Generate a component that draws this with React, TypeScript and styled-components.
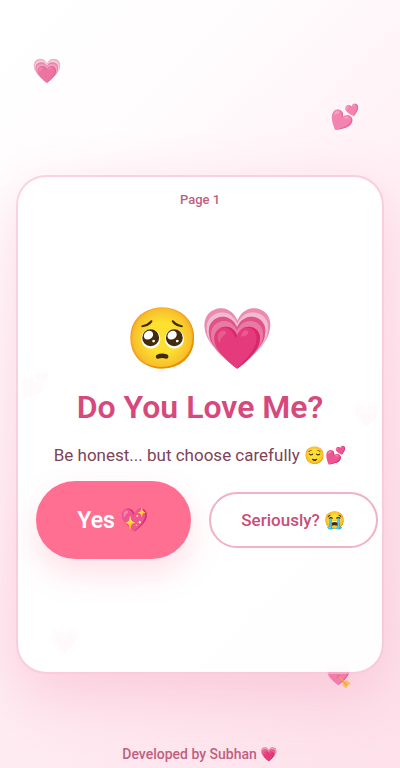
import React from "react";
import styled, { createGlobalStyle } from "styled-components";

const GlobalStyle = createGlobalStyle`
  *, *::before, *::after {
    box-sizing: border-box;
  }
  body {
    margin: 0;
    font-family: Roboto, "Noto Color Emoji", sans-serif;
  }
`;

const Page = styled.div`
  position: relative;
  display: flex;
  flex-direction: column;
  min-height: 100vh;
  overflow: hidden;
  padding: 175px 16px 4px;
  background: linear-gradient(135deg, #ffffff 0%, #fffdfe 20%, #fff0f5 50%, #fde0ea 100%);
`;

const FloatingHeart = styled.span<{ $top: string; $left: string }>`
  position: absolute;
  top: ${(p) => p.$top};
  left: ${(p) => p.$left};
  font-size: 24px;
  line-height: 28px;
  opacity: 0.7;
  pointer-events: none;
`;

const Card = styled.main`
  position: relative;
  display: flex;
  flex-direction: column;
  flex: 1;
  padding: 14px 18px;
  border: 2px solid rgba(248, 187, 208, 0.65);
  border-radius: 30px;
  background: rgba(255, 255, 255, 0.96);
  background-clip: padding-box;
  box-shadow: 0 20px 60px rgba(240, 98, 146, 0.24);
  text-align: center;
`;

const PageLabel = styled.p`
  margin: 0;
  color: #bf5f80;
  font-size: 13px;
  font-weight: 500;
  line-height: 18px;
`;

const Content = styled.section`
  display: flex;
  flex-direction: column;
  flex: 1;
  padding-top: 94px;
`;

const HeroEmoji = styled.div`
  font-size: 60px;
  line-height: 72px;
`;

const Title = styled.h1`
  margin: 12px 0 0;
  color: #d6497c;
  font-size: 32px;
  font-weight: 600;
  line-height: 40px;
`;

const Subtitle = styled.p`
  margin: 16px 0 0;
  color: #7d4358;
  font-size: 17px;
  line-height: 24px;
  white-space: nowrap;
`;

const Actions = styled.div`
  display: flex;
  align-items: center;
  gap: 18px;
  margin: 14px -14px 0 0;
`;

const Button = styled.button<{ $primary?: boolean }>`
  flex: ${(p) => (p.$primary ? "156 1 0" : "167 1 0")};
  padding: 0;
  height: ${(p) => (p.$primary ? 78 : 56)}px;
  border: ${(p) => (p.$primary ? "none" : "2px solid #f2b1c7")};
  border-radius: 40px;
  background: ${(p) => (p.$primary ? "#ff6f91" : "#ffffff")};
  box-shadow: ${(p) => (p.$primary ? "0 14px 32px rgba(255, 111, 145, 0.22)" : "none")};
  color: ${(p) => (p.$primary ? "#ffffff" : "#c74e79")};
  font-family: inherit;
  font-size: ${(p) => (p.$primary ? 23 : 17)}px;
  font-weight: ${(p) => (p.$primary ? 600 : 500)};
  white-space: nowrap;
  cursor: pointer;
`;

const Footer = styled.footer`
  position: relative;
  margin-top: 70px;
  color: #bf6080;
  font-size: 14px;
  font-weight: 500;
  line-height: 20px;
  text-align: center;
`;

const hearts = [
  { glyph: "💗", top: "57px", left: "8%" },
  { glyph: "💕", top: "103px", left: "82.5%" },
  { glyph: "💕", top: "370px", left: "5%" },
  { glyph: "💗", top: "400px", left: "88%" },
  { glyph: "💗", top: "627px", left: "12.5%" },
  { glyph: "💘", top: "661px", left: "80.5%" },
];

export default function App() {
  return (
    <>
      <GlobalStyle />
      <Page>
        {hearts.map((heart) => (
          <FloatingHeart key={heart.top} $top={heart.top} $left={heart.left} aria-hidden="true">
            {heart.glyph}
          </FloatingHeart>
        ))}
        <Card>
          <PageLabel>Page 1</PageLabel>
          <Content>
            <HeroEmoji>🥺💗</HeroEmoji>
            <Title>Do You Love Me?</Title>
            <Subtitle>Be honest... but choose carefully 😌💕</Subtitle>
            <Actions>
              <Button type="button" $primary>Yes 💖</Button>
              <Button type="button">Seriously? 😭</Button>
            </Actions>
          </Content>
        </Card>
        <Footer>Developed by Subhan 💗</Footer>
      </Page>
    </>
  );
}
